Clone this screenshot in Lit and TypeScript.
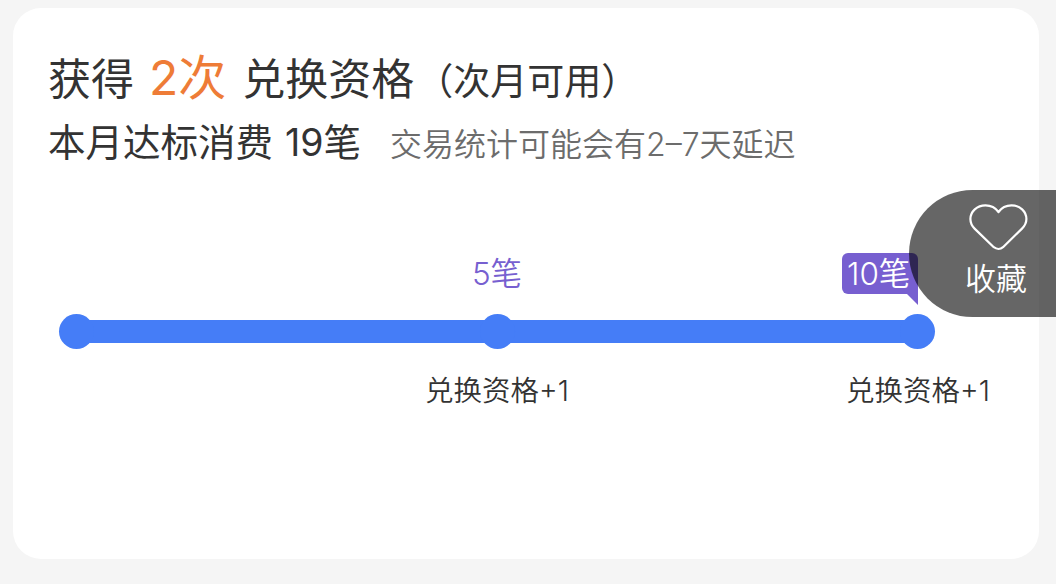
import { LitElement, html, css } from "lit";
import { customElement } from "lit/decorators.js";

@customElement("favorite-button")
class FavoriteButton extends LitElement {
  static styles = css`
    :host {
      display: block;
    }
    .tab {
      box-sizing: border-box;
      width: 147px;
      height: 127px;
      padding: 14px 0 0 56px;
      border-radius: 64px 0 0 64px;
      background: rgba(0, 0, 0, 0.6);
      color: #fff;
      font-size: 31px;
      font-weight: 350;
      line-height: 40px;
      white-space: nowrap;
    }
    .heart {
      display: block;
      width: 60px;
      height: 46px;
      margin: 0 0 9px 4px;
    }
  `;

  render() {
    return html`
      <div class="tab">
        <svg class="heart" viewBox="0 0 60 46" fill="none">
          <path
            d="M29.5 8C26 3 22 1.3 16.5 1.3C8 1.3 1.4 7.5 1.4 15C1.4 18.8 2.8 21.8 5.6 24.6L24.8 43.2C27.5 45.3 31.5 45.3 34 43.2L53 24.6C55.8 21.8 57.4 18.8 57.4 15C57.4 7.5 51 1.3 42.5 1.3C37 1.3 33 3 29.5 8Z"
            stroke="#fff"
            stroke-width="2.2"
            stroke-linejoin="round"
          />
        </svg>
        <span>收藏</span>
      </div>
    `;
  }
}

@customElement("app-root")
class AppRoot extends LitElement {
  static styles = css`
    :host {
      --text: #333;
      --accent: #ee7c37;
      --purple: #775fd0;
      --blue: #457df7;
      display: block;
      position: relative;
      box-sizing: border-box;
      width: 1056px;
      height: 584px;
      padding: 8px 17px 25px 13px;
      overflow: hidden;
      background: #f5f5f5;
      color: var(--text);
      font-family: Inter, "Noto Sans CJK SC", sans-serif;
      font-weight: 400;
    }
    .card {
      box-sizing: border-box;
      height: 551px;
      padding: 36px 35px 0;
      border-radius: 28px;
      background: #fff;
    }
    .title,
    .summary {
      display: flex;
      align-items: baseline;
      white-space: nowrap;
    }
    .title {
      height: 69px;
      font-size: 43px;
      line-height: 68px;
    }
    .count {
      margin: 0 16px 0 15px;
      color: var(--accent);
      font-size: 48px;
    }
    .note {
      margin-left: 2px;
      font-size: 37px;
    }
    .summary {
      height: 60px;
      font-size: 37.5px;
      line-height: 60px;
    }
    .total {
      margin-left: 12px;
    }
    .hint {
      margin-left: 29px;
      color: #6c6c6c;
      font-size: 32px;
      font-weight: 350;
    }
    .progress {
      display: grid;
      grid-template-columns: 1fr 1fr 1fr;
      width: 1263px;
      margin: 80px 0 0 -182.5px;
      justify-items: center;
    }
    .amount {
      box-sizing: border-box;
      height: 41px;
      color: var(--purple);
      font-size: 31.5px;
      font-weight: 350;
      line-height: 41px;
      white-space: nowrap;
    }
    .flag {
      position: relative;
      width: 76px;
      margin-right: 76px;
      padding-left: 5px;
      border-radius: 6px 6px 0 6px;
      background: var(--purple);
      color: #fff;
    }
    .flag::after {
      content: "";
      position: absolute;
      right: 0;
      top: 40px;
      border-top: 12px solid var(--purple);
      border-left: 12px solid transparent;
    }
    .track {
      grid-column: 1 / -1;
      justify-self: center;
      display: flex;
      align-items: center;
      justify-content: space-between;
      width: 876px;
      height: 35px;
      margin-top: 19.5px;
      background: linear-gradient(var(--blue), var(--blue)) center / 842px 23px
        no-repeat;
    }
    .dot {
      width: 35px;
      height: 35px;
      border-radius: 50%;
      background: var(--blue);
    }
    .reward {
      margin-top: 22.5px;
      font-size: 28.5px;
      font-weight: 350;
      line-height: 40px;
      white-space: nowrap;
    }
    .favorite {
      position: absolute;
      right: 0;
      top: 190px;
    }
  `;

  steps = [
    { amount: "", reward: "", current: false },
    { amount: "5笔", reward: "兑换资格+1", current: false },
    { amount: "10笔", reward: "兑换资格+1", current: true },
  ];

  render() {
    return html`
      <div class="card">
        <div class="title">
          <span>获得</span>
          <span class="count">2次</span>
          <span>兑换资格</span>
          <span class="note">（次月可用）</span>
        </div>
        <div class="summary">
          <span>本月达标消费</span>
          <span class="total">19笔</span>
          <span class="hint">交易统计可能会有2–7天延迟</span>
        </div>
        <div class="progress">
          ${this.steps.map(
            (step) =>
              html`<div class="amount ${step.current ? "flag" : ""}">
                ${step.amount}
              </div>`
          )}
          <div class="track">
            ${this.steps.map(() => html`<div class="dot"></div>`)}
          </div>
          ${this.steps.map(
            (step) => html`<div class="reward">${step.reward}</div>`
          )}
        </div>
      </div>
      <favorite-button class="favorite"></favorite-button>
    `;
  }
}

export { AppRoot, FavoriteButton };
declare global {
  interface HTMLElementTagNameMap {
    "app-root": AppRoot;
    "favorite-button": FavoriteButton;
  }
}
